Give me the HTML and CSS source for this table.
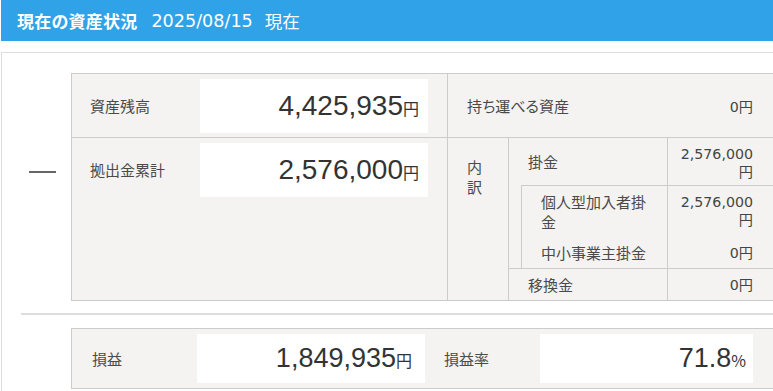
FILE: index.html
```html
<!DOCTYPE html>
<html lang="ja">
<head>
<meta charset="utf-8">
<title>現在の資産状況</title>
<link rel="stylesheet" href="styles.css">
</head>
<body>
<div class="page">
  <header class="topbar">
    <span class="title">現在の資産状況</span>
    <span class="date">2025/08/15</span>
    <span class="now">現在</span>
  </header>
  <section class="panel">
    <div class="calc">
      <div class="sign"><span class="minus"></span></div>
      <div class="sheet">
        <div class="cell main r1">
          <div class="lbl">資産残高</div>
          <div class="bigbox"><span class="num">4,425,935</span><span class="unit">円</span></div>
        </div>
        <div class="cell side r1">
          <span class="slbl">持ち運べる資産</span>
          <span class="sval">0円</span>
        </div>
        <div class="cell main r2">
          <div class="lbl">拠出金累計</div>
          <div class="bigbox"><span class="num">2,576,000</span><span class="unit">円</span></div>
        </div>
        <div class="breakdown">
          <div class="bd-head">内訳</div>
          <div class="bd-body">
            <div class="bd-row kakekin">
              <div class="bd-lbl">掛金</div>
              <div class="bd-val">2,576,000円</div>
            </div>
            <div class="nest">
              <div class="bd-row kojin">
                <div class="bd-lbl">個人型加入者掛金</div>
                <div class="bd-val">2,576,000円</div>
              </div>
              <div class="bd-row chusho">
                <div class="bd-lbl">中小事業主掛金</div>
                <div class="bd-val">0円</div>
              </div>
            </div>
            <div class="bd-row ikan">
              <div class="bd-lbl">移換金</div>
              <div class="bd-val">0円</div>
            </div>
          </div>
        </div>
      </div>
    </div>
    <div class="sep"></div>
    <div class="result">
      <div class="rlbl first">損益</div>
      <div class="rbox wide"><span class="rnum">1,849,935</span><span class="unit">円</span></div>
      <div class="rlbl second">損益率</div>
      <div class="rbox narrow"><span class="rnum">71.8</span><span class="unit">%</span></div>
    </div>
  </section>
</div>
</body>
</html>
```

FILE: styles.css
```css
html, body {
  margin: 0;
  padding: 0;
  overflow: hidden;
  background: #fff;
}
body {
  font-family: "DejaVu Sans", "Noto Sans CJK JP", sans-serif;
  color: #4a4a4a;
}
.page {
  padding-left: 1px;
  width: 900px;
}
.topbar {
  height: 41px;
  background: #30a2e8;
  color: #fff;
  display: flex;
  align-items: center;
  padding-left: 16px;
  font-size: 17px;
  box-sizing: border-box;
}
.title {
  font-family: "Noto Sans CJK JP", sans-serif;
  font-weight: bold;
  letter-spacing: 0.2px;
}
.date {
  margin-left: 14px;
  font-size: 17.6px;
}
.now {
  margin-left: 12px;
  font-family: "Noto Sans CJK JP", sans-serif;
  font-size: 17.5px;
}
.panel {
  margin-top: 11px;
  border: 1px solid #ddd;
  width: 840px;
  height: 400px;
  padding-top: 20px;
  box-sizing: border-box;
}
.calc {
  display: flex;
}
.sign {
  width: 69px;
  flex: none;
  padding: 98px 0 0 27px;
  box-sizing: border-box;
}
.minus {
  display: block;
  width: 27px;
  height: 2px;
  background: #666;
}
.sheet {
  width: 703px;
  box-sizing: border-box;
  border: 1px solid #ccc;
  background: #f4f3f1;
  display: grid;
  grid-template-columns: 376px 1fr;
}
.cell.r1 {
  border-bottom: 1px solid #ccc;
}
.main {
  display: flex;
  align-items: flex-start;
  padding: 5px 0 4px 18px;
  border-right: 1px solid #ccc;
}
.lbl {
  width: 110px;
  line-height: 54px;
  font-size: 15px;
  font-family: "Noto Sans CJK JP", sans-serif;
}
.bigbox {
  width: 228px;
  height: 54px;
  background: #fff;
  text-align: right;
  line-height: 54px;
  padding-right: 9px;
  box-sizing: border-box;
  color: #333;
}
.num {
  font-family: "Liberation Sans", sans-serif;
  font-size: 28px;
}
.unit {
  font-family: "Noto Sans CJK JP", sans-serif;
  font-size: 16px;
}
.side {
  display: flex;
  align-items: center;
  justify-content: space-between;
  padding: 0 20px 0 19px;
}
.slbl {
  font-family: "Noto Sans CJK JP", sans-serif;
  font-size: 15px;
  font-feature-settings: "palt";
}
.sval, .bd-val {
  font-size: 14.2px;
  color: #444;
}
.breakdown {
  display: grid;
  grid-template-columns: 61px 1fr;
}
.bd-head {
  border-right: 1px solid #ccc;
  padding: 19px 19px 0 19px;
  line-height: 20px;
  font-size: 15px;
  font-family: "Noto Sans CJK JP", sans-serif;
}
.bd-row {
  display: grid;
  grid-template-columns: 159px 1fr;
  box-sizing: border-box;
}
.nest .bd-row {
  grid-template-columns: 146px 1fr;
}
.nest {
  margin-left: 12px;
  border-left: 1px solid #ccc;
  border-top: 1px solid #ccc;
}
.bd-lbl {
  border-right: 1px solid #ccc;
  padding: 0 10px 0 19px;
  display: flex;
  align-items: center;
  font-size: 15px;
  line-height: 20px;
  font-family: "Noto Sans CJK JP", sans-serif;
}
.bd-val {
  display: flex;
  flex-direction: column;
  justify-content: center;
  text-align: right;
  padding: 0 20px 0 7px;
  line-height: 18px;
}
.kakekin {
  height: 47px;
}
.kakekin .bd-val {
  padding-top: 3px;
}
.kojin {
  height: 52px;
}
.kojin .bd-lbl {
  align-items: flex-start;
  padding-top: 6px;
}
.kojin .bd-val {
  justify-content: flex-start;
  padding-top: 7px;
}
.chusho {
  height: 30px;
}
.ikan {
  height: 32px;
  border-top: 1px solid #ccc;
}
.sep {
  margin: 12px 0 0 19px;
  height: 2px;
  background: #ddd;
}
.result {
  margin: 13px 0 0 69px;
  width: 703px;
  box-sizing: border-box;
  border: 1px solid #ccc;
  background: #f4f3f1;
  display: flex;
  align-items: center;
  padding: 5px 0;
}
.rlbl {
  font-family: "Noto Sans CJK JP", sans-serif;
  font-size: 15px;
  box-sizing: border-box;
}
.rlbl.first {
  width: 125px;
  padding-left: 20px;
}
.rlbl.second {
  width: 115px;
  padding-left: 19px;
}
.rbox {
  height: 49px;
  line-height: 49px;
  background: #fff;
  text-align: right;
  box-sizing: border-box;
  color: #333;
}
.rbox.wide {
  width: 228px;
  padding-right: 13px;
}
.rbox.narrow {
  width: 213px;
  padding-right: 7px;
}
.rnum {
  font-family: "Liberation Sans", sans-serif;
  font-size: 27px;
}
```
